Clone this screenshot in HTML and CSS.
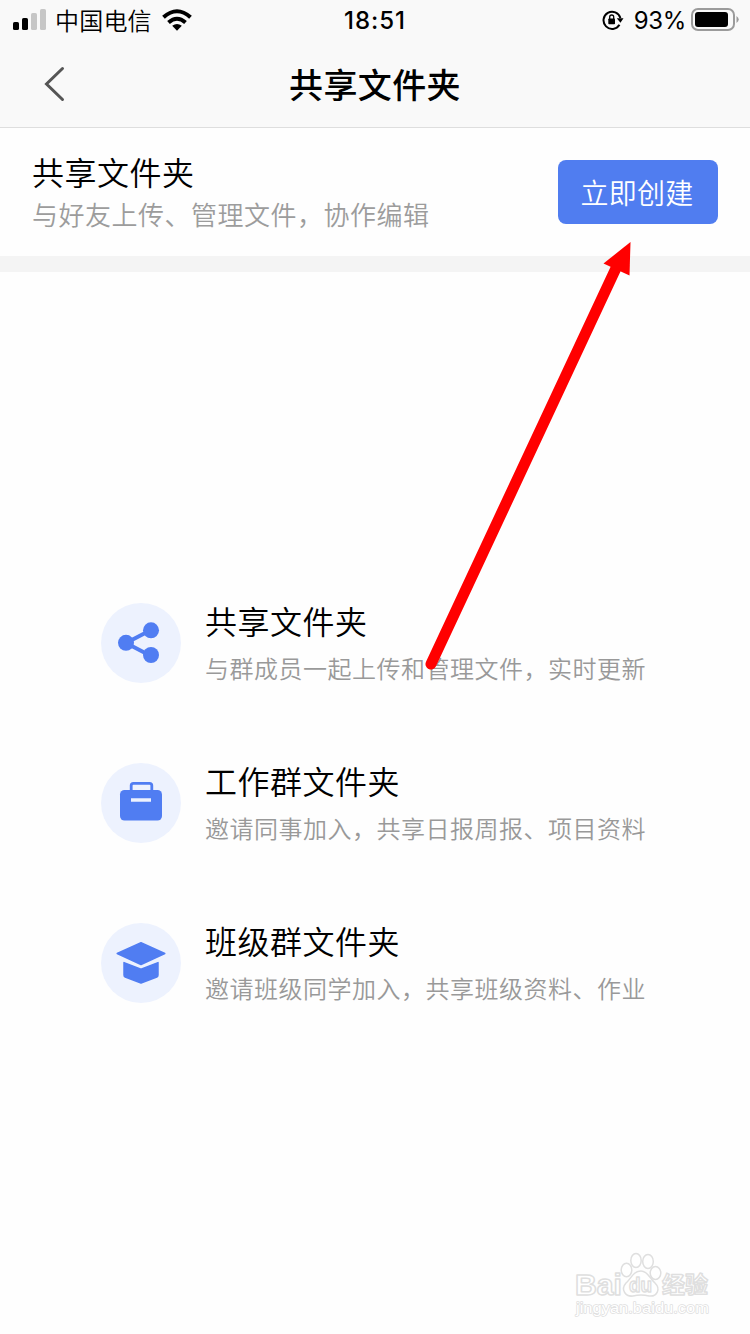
FILE: index.html
```html
<!DOCTYPE html>
<html lang="zh-CN">
<head>
<meta charset="utf-8">
<title>共享文件夹</title>
<link rel="stylesheet" href="styles.css">
</head>
<body>
<div class="screen">
  <header class="top">
    <div class="status">
      <div class="status-left">
        <svg class="signal" width="34" height="22" viewBox="0 0 34 22"><rect x="0" y="13" width="6" height="8" rx="1.6"/><rect x="9" y="9" width="6" height="12" rx="1.6"/><g fill="#c6c6c6"><rect x="18" y="4" width="6" height="17" rx="1.6"/><rect x="27" y="0" width="6" height="21" rx="1.6"/></g></svg>
        <span class="carrier">中国电信</span>
        <svg class="wifi" width="30" height="22" viewBox="0 0 30 22"><g fill="none" stroke="#000" stroke-width="4"><path d="M1.5 8.3Q15-3.8 28.500 8.300"/><path d="M6.500 13.500Q15 6 23.500 13.500"/></g><path d="M10.200 16.800Q15 13 19.800 16.800L15 21.800Z"/></svg>
      </div>
      <span class="time">18:51</span>
      <div class="status-right">
        <svg class="lock" width="22" height="22" viewBox="0 0 22 22"><path d="M17.500 15.800A8.600 8.600 0 1 1 18.400 9" fill="none" stroke="#000" stroke-width="2"/><path d="M14.800 9.200H21.500L18.400 13.700Z"/><rect x="6.300" y="9.500" width="6.700" height="5.800" rx=".8"/><path d="M7.700 10V8a2 2 0 0 1 4 0V10" fill="none" stroke="#000" stroke-width="1.300"/></svg>
        <span class="percent">93%</span>
        <svg class="battery" width="48" height="24" viewBox="0 0 48 24"><rect x="1" y="1" width="42" height="21" rx="6" fill="none" stroke="#9b9b9b" stroke-width="2"/><rect x="4" y="4" width="33" height="15" rx="3"/><path d="M45.500 8Q50 11.500 45.500 15Z" fill="#9b9b9b"/></svg>
      </div>
    </div>
    <nav class="nav">
      <svg class="back" width="22" height="36" viewBox="0 0 22 36"><path d="M19.500 2.500L3.500 18L19.500 33.500" fill="none" stroke="#555" stroke-width="3" stroke-linecap="round"/></svg>
      <h1 class="nav-title">共享文件夹</h1>
    </nav>
  </header>
  <section class="banner">
    <div class="banner-text">
      <h2 class="title">共享文件夹</h2>
      <p class="banner-desc">与好友上传、管理文件，协作编辑</p>
    </div>
    <button class="create">立即创建</button>
  </section>
  <main class="features">
    <div class="feature">
      <svg class="icon" viewBox="0 0 80 80"><path d="M50 27L25 40L50 53" fill="none" stroke="#507df2" stroke-width="4"/><g fill="#507df2"><circle cx="25" cy="39.800" r="8"/><circle cx="50" cy="27.300" r="8"/><circle cx="50" cy="52" r="8"/></g></svg>
      <div>
        <h2 class="title">共享文件夹</h2>
        <p class="desc">与群成员一起上传和管理文件，实时更新</p>
      </div>
    </div>
    <div class="feature">
      <svg class="icon" viewBox="0 0 80 80"><rect x="19" y="27" width="42" height="30.500" rx="4.500" fill="#507df2"/><path d="M30.200 28V22.500Q30.200 20.300 32.400 20.300H48.600Q50.800 20.300 50.800 22.500V28" fill="none" stroke="#507df2" stroke-width="2.800"/><path d="M30 37H50" stroke="#edf2fe" stroke-width="3.600"/></svg>
      <div>
        <h2 class="title">工作群文件夹</h2>
        <p class="desc">邀请同事加入，共享日报周报、项目资料</p>
      </div>
    </div>
    <div class="feature">
      <svg class="icon" viewBox="0 0 80 80"><g fill="#507df2" stroke="#507df2" stroke-width="1.500" stroke-linejoin="round"><path d="M40 19.800L63.800 30.500L40 41.500L16.200 30.500Z"/><path d="M23 39.600L40 46.300L57 39.600V52Q57 53.500 55.800 54L40 60L24.200 54Q23 53.500 23 52Z"/></g></svg>
      <div>
        <h2 class="title">班级群文件夹</h2>
        <p class="desc">邀请班级同学加入，共享班级资料、作业</p>
      </div>
    </div>
  </main>
  <svg class="arrow" width="220" height="440" viewBox="420 235 220 440"><path d="M431 664L617 266" stroke="#f00" stroke-width="11" stroke-linecap="round"/><path d="M630.500 242L603.500 263.500L629.500 275.500Z" fill="#f00"/></svg>
  <svg class="watermark" width="150" height="76" viewBox="570 1246 150 76">
    <g fill="#fff" stroke="#dfdfdf" stroke-width="1.500" stroke-linejoin="round">
      <ellipse cx="626.500" cy="1270" rx="5.300" ry="6.800"/><ellipse cx="636" cy="1260.500" rx="5.200" ry="7"/><ellipse cx="648" cy="1261.500" rx="5.300" ry="7"/><ellipse cx="655.500" cy="1273" rx="5.300" ry="6.500"/><path d="M641 1271C633 1271 631 1279 626 1283C620 1290 626 1297 633 1296Q641 1294 649 1296C657 1297 661 1289 655 1283C650 1279 648 1271 641 1271Z"/>
      <text class="wm-latin" x="575" y="1294.500" textLength="47" lengthAdjust="spacingAndGlyphs">Bai</text>
      <text class="wm-du" x="629" y="1292" textLength="23" lengthAdjust="spacingAndGlyphs">du</text>
      <text class="wm-cjk" x="662" y="1293" textLength="46" lengthAdjust="spacingAndGlyphs">经验</text>
      <text class="wm-url" x="576" y="1313" textLength="133" lengthAdjust="spacingAndGlyphs">jingyan.baidu.com</text>
    </g>
  </svg>
</div>
</body>
</html>
```
FILE: styles.css
```css
* { box-sizing: border-box; }
body, h1, h2, p { margin: 0; }
body { background: #fefefe; color: #000; font-family: "Noto Sans CJK SC", sans-serif; }
svg { display: block; flex: none; }
.screen { position: relative; width: 750px; height: 1334px; overflow: hidden; }
.top { height: 128px; background: #f9f9f9; border-bottom: 1px solid #dedede; }
.status { display: grid; grid-template-columns: 1fr auto 1fr; align-items: center; height: 40px; padding: 0 11px 0 13px; }
.status-left, .status-right { display: flex; align-items: center; }
.status-right { justify-content: flex-end; }
.carrier { margin-left: 8px; font-size: 24px; line-height: 40px; letter-spacing: .2px; font-weight: 350; }
.wifi { margin-left: 10px; }
.time { margin-right: 2px; padding-top: 2px; font: 500 24px/38px Inter, sans-serif; letter-spacing: 1px; }
.percent { margin: 0 5px 0 10px; padding-top: 2px; font: 400 24px/38px Inter, sans-serif; letter-spacing: -.3px; }
.nav { display: grid; grid-template-columns: 100px 1fr 100px; align-items: center; height: 87px; }
.back { margin-left: 43px; }
.nav-title { text-align: center; font-size: 34px; line-height: 50px; font-weight: 500; letter-spacing: .4px; }
.banner { display: flex; justify-content: space-between; align-items: flex-start; height: 144px; padding: 20px 32px 0; border-bottom: 16px solid #f4f4f4; }
.title { font-size: 32px; line-height: 46px; font-weight: 350; letter-spacing: .5px; }
.banner-desc { margin-top: 1px; font-size: 26px; line-height: 38px; font-weight: 350; letter-spacing: .5px; color: #9c9c9c; }
.create { width: 160px; height: 64px; margin-top: 12px; padding: 0 2px 0 0; border: 0; border-radius: 8px; background: #507df0; color: #fff; font: 350 28px/62px "Noto Sans CJK SC", sans-serif; letter-spacing: .3px; }
.features { display: flex; flex-direction: column; gap: 80px; padding: 331px 0 0 101px; }
.feature { display: flex; gap: 24px; height: 80px; }
.feature .title { margin-top: -6px; }
.icon { width: 80px; height: 80px; border-radius: 50%; background: #edf2fe; }
.desc { margin-top: 7px; font-size: 24px; line-height: 36px; font-weight: 350; letter-spacing: .5px; color: #999; }
.arrow { position: absolute; left: 420px; top: 235px; }
.watermark { position: absolute; left: 570px; top: 1246px; }
.wm-latin, .wm-du { font: 700 29px "Liberation Sans", sans-serif; }
.wm-du { font-size: 20px; }
.wm-cjk { font: 700 23px "Noto Sans CJK SC", sans-serif; }
.wm-url { font: 400 15.500px "Liberation Sans", sans-serif; paint-order: stroke; }
```
